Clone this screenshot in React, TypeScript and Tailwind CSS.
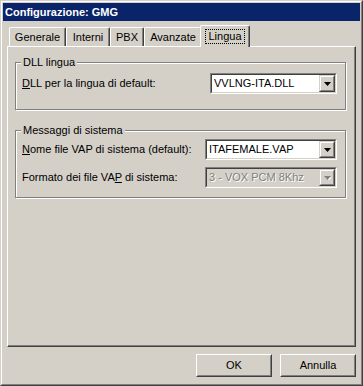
import React from "react";

const FONT = "font-['Liberation_Sans',Arial,sans-serif]";

const tabs = [
  { label: "Generale", w: "w-[57px]" },
  { label: "Interni", w: "w-[44px]" },
  { label: "PBX", w: "w-[34px]" },
  { label: "Avanzate", w: "w-[58px]" },
];

const Arrow: React.FC<{ disabled?: boolean }> = ({ disabled }) => (
  <svg width="7" height="4" viewBox="0 0 7 4" className="block">
    {disabled && <path d="M1 1h7L4.5 4.5z" fill="#ffffff" />}
    <path d="M0 0h7L3.5 4z" fill={disabled ? "#808080" : "#000000"} />
  </svg>
);

const Combo: React.FC<{ value: string; width: string; disabled?: boolean }> = ({
  value,
  width,
  disabled,
}) => (
  <div
    className={`${width} h-[21px] border border-t-[#808080] border-l-[#808080] border-b-white border-r-white`}
  >
    <div
      className={`h-full flex border border-t-[#404040] border-l-[#404040] border-b-[#d4d0c8] border-r-[#d4d0c8] ${
        disabled ? "bg-[#d4d0c8]" : "bg-white"
      }`}
    >
      <div
        className={`flex-1 flex items-center pl-[2px] text-[11px] ${
          disabled ? "text-[#808080] [text-shadow:1px_1px_0_#ffffff]" : "text-black"
        }`}
      >
        {value}
      </div>
      <div className="w-[16px] h-full border border-t-[#d4d0c8] border-l-[#d4d0c8] border-b-[#404040] border-r-[#404040] bg-[#d4d0c8]">
        <div className="h-full flex items-center justify-center border border-t-white border-l-white border-b-[#808080] border-r-[#808080]">
          <Arrow disabled={disabled} />
        </div>
      </div>
    </div>
  </div>
);

const GroupBox: React.FC<{ title: string; className: string; children: React.ReactNode }> = ({
  title,
  className,
  children,
}) => (
  <div
    className={`relative w-[331px] ml-[7px] border border-[#808080] shadow-[1px_1px_0_#ffffff,inset_1px_1px_0_#ffffff] ${className}`}
  >
    <span className="absolute left-[5px] top-[-8px] bg-[#d4d0c8] px-[2px] text-[11px] leading-[14px]">
      {title}
    </span>
    {children}
  </div>
);

const Button: React.FC<{ children: React.ReactNode }> = ({ children }) => (
  <div className="w-[76px] h-[23px] border border-t-white border-l-white border-b-[#404040] border-r-[#404040]">
    <div className="h-full flex items-center justify-center border border-t-[#d4d0c8] border-l-[#d4d0c8] border-b-[#808080] border-r-[#808080] text-[11px]">
      {children}
    </div>
  </div>
);

const App: React.FC = () => {
  return (
    <div className={`w-[363px] h-[386px] bg-[#d4d0c8] ${FONT} text-black select-none`}>
      <div className="h-full border border-t-[#d4d0c8] border-l-[#d4d0c8] border-b-[#404040] border-r-[#404040]">
        <div className="h-full flex flex-col p-[1px] border border-t-white border-l-white border-b-[#808080] border-r-[#808080]">
          <div className="h-[18px] bg-[#0a246a] flex items-center pl-[2px] text-white text-[11px] font-bold">
            Configurazione: GMG
          </div>

          <div className="flex flex-col px-[4px]">
            <div className="h-[25px] flex items-end pl-[2px]">
              {tabs.map((t) => (
                <div
                  key={t.label}
                  className={`${t.w} h-[19px] flex items-center justify-center text-[11px] border-l border-t border-r border-l-white border-t-white border-r-[#404040] rounded-t-[2px] shadow-[inset_-1px_0_0_#808080]`}
                >
                  {t.label}
                </div>
              ))}
              <div className="relative z-10 w-[50px] h-[22px] -mx-[2px] mb-[-1px] bg-[#d4d0c8] flex items-start justify-center pt-[3px] text-[11px] border-l border-t border-r border-l-white border-t-white border-r-[#404040] rounded-t-[2px] shadow-[inset_-1px_0_0_#808080]">
                <span className="border border-dotted border-black px-[2px] leading-[13px]">
                  Lingua
                </span>
              </div>
            </div>

            <div className="h-[301px] flex flex-col border border-t-white border-l-white border-b-[#404040] border-r-[#404040] shadow-[inset_-1px_-1px_0_#808080]">
              <GroupBox title="DLL lingua" className="mt-[15px] h-[48px]">
                <div className="flex items-center pl-[6px] pr-[8px] pt-[10px]">
                  <span className="flex-1 text-[11px]">
                    <u>D</u>LL per la lingua di default:
                  </span>
                  <Combo value="VVLNG-ITA.DLL" width="w-[127px]" />
                </div>
              </GroupBox>

              <GroupBox title="Messaggi di sistema" className="mt-[20px] h-[68px]">
                <div className="flex flex-col gap-[7px] pl-[6px] pr-[8px] pt-[8px]">
                  <div className="flex items-center">
                    <span className="flex-1 text-[11px]">
                      <u>N</u>ome file VAP di sistema (default):
                    </span>
                    <Combo value="ITAFEMALE.VAP" width="w-[132px]" />
                  </div>
                  <div className="flex items-center">
                    <span className="flex-1 text-[11px]">
                      Formato dei file VA<u>P</u> di sistema:
                    </span>
                    <Combo value="3 - VOX PCM 8Khz" width="w-[132px]" disabled />
                  </div>
                </div>
              </GroupBox>
            </div>

            <div className="flex justify-end gap-[8px] pt-[7px]">
              <Button>OK</Button>
              <Button>Annulla</Button>
            </div>
          </div>
        </div>
      </div>
    </div>
  );
};

export default App;
